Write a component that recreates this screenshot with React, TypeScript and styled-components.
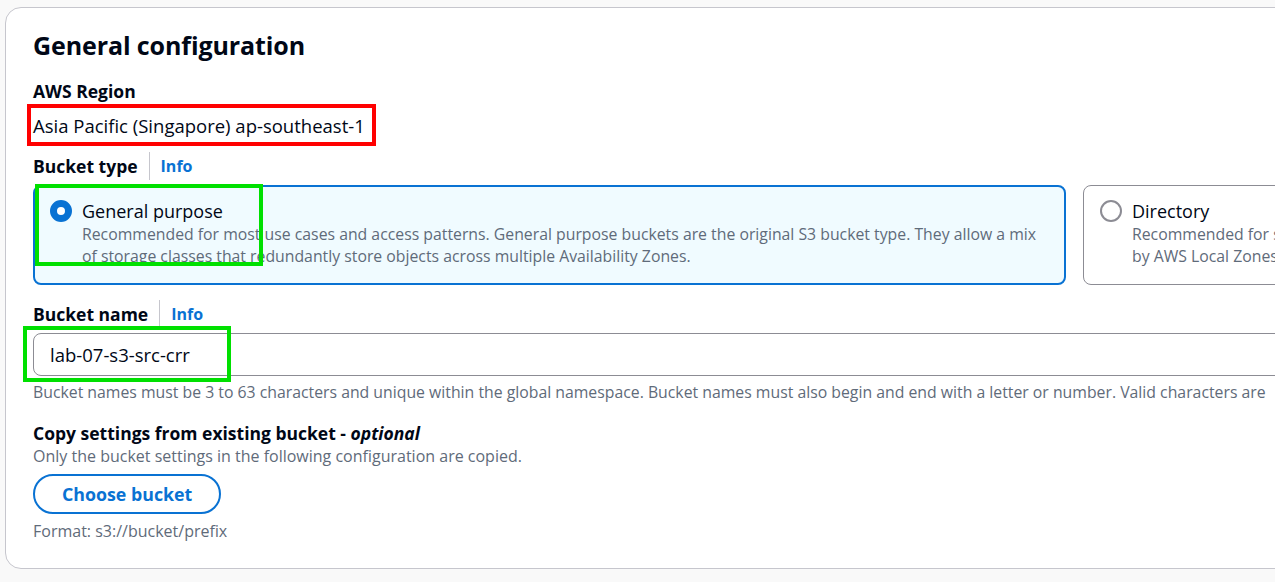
import React from 'react';
import styled, { createGlobalStyle } from 'styled-components';

const GlobalStyle = createGlobalStyle`
	html, body {
		margin: 0;
		padding: 0;
		background: #f9f9f9;
		overflow: hidden;
	}
	body {
		font-family: 'Open Sans', 'Noto Sans', Arial, sans-serif;
		color: #000716;
	}
`;

const Page = styled.div`
	position: relative;
	width: 1275px;
	height: 582px;
	padding: 7px 0 0 5px;
	box-sizing: border-box;
	overflow: hidden;
`;

const Card = styled.section`
	width: 2140px;
	box-sizing: border-box;
	background: #ffffff;
	border: 1px solid #c6c6cd;
	border-radius: 16px;
	padding: 20px 27px 26px;
`;

const Heading = styled.h2`
	margin: 0 0 18px;
	font-size: 25px;
	line-height: 34px;
	font-weight: 700;
	letter-spacing: -0.1px;
`;

const Field = styled.div<{ $gap?: number }>`
	margin-bottom: ${p => p.$gap ?? 0}px;
`;

const LabelRow = styled.div`
	display: flex;
	align-items: center;
	height: 28px;
	margin-bottom: 5px;
`;

const Label = styled.div`
	font-size: 17.5px;
	font-weight: 700;
	line-height: 22px;

	em {
		font-weight: 700;
		font-style: italic;
	}
`;

const InfoLink = styled.a`
	display: flex;
	align-items: center;
	height: 28px;
	margin-left: 11px;
	padding-left: 11px;
	border-left: 1px solid #c6c6cd;
	font-size: 16px;
	font-weight: 700;
	color: #0972d3;
	text-decoration: none;
	cursor: pointer;
`;

const Value = styled.div`
	font-size: 18.5px;
	line-height: 24px;
	padding-top: 12px;
`;

const Tiles = styled.div`
	display: grid;
	grid-template-columns: 1033px 1033px;
	gap: 17px;
`;

const Tile = styled.label<{ $selected?: boolean }>`
	display: grid;
	grid-template-columns: 22px 1fr;
	column-gap: 10px;
	box-sizing: border-box;
	height: 100px;
	padding: ${p => (p.$selected ? '13px 20px 12px 15px' : '14px 21px 13px 16px')};
	border: ${p => (p.$selected ? '2px solid #0972d3' : '1px solid #8c8c94')};
	border-radius: 8px;
	background: ${p => (p.$selected ? '#f0fbff' : '#ffffff')};
	cursor: pointer;
`;

const Radio = styled.span<{ $checked?: boolean }>`
	width: 22px;
	height: 22px;
	box-sizing: border-box;
	border-radius: 50%;
	border: ${p => (p.$checked ? '7px solid #0972d3' : '2px solid #8c8c94')};
	background: #ffffff;
`;

const TileTitle = styled.div`
	font-size: 18px;
	line-height: 22px;
	margin-bottom: 1px;
`;

const TileDesc = styled.div`
	font-size: 15.8px;
	line-height: 22px;
	color: #5f6b7a;
	white-space: nowrap;
`;

const Input = styled.input`
	display: block;
	width: 100%;
	height: 43px;
	box-sizing: border-box;
	padding: 0 16px;
	border: 1px solid #8c8c94;
	border-radius: 8px;
	font-family: inherit;
	font-size: 18.5px;
	color: #000716;
	background: #ffffff;
	outline: none;
`;

const Hint = styled.div<{ $top?: number }>`
	font-size: 16px;
	line-height: 22px;
	color: #5f6b7a;
	white-space: nowrap;
	padding-top: ${p => p.$top ?? 0}px;
`;

const FieldHint = styled(Hint)`
	font-size: 15.8px;
`;

const OutlineButton = styled.button`
	display: block;
	height: 40px;
	margin: 7px 0 6px;
	padding: 0 27px;
	border: 2px solid #0972d3;
	border-radius: 20px;
	background: #ffffff;
	color: #0972d3;
	font-family: inherit;
	font-size: 17.8px;
	font-weight: 700;
	cursor: pointer;
`;

const Annotation = styled.div<{ $x: number; $y: number; $w: number; $h: number; $color: string }>`
	position: absolute;
	left: ${p => p.$x}px;
	top: ${p => p.$y}px;
	width: ${p => p.$w}px;
	height: ${p => p.$h}px;
	box-sizing: border-box;
	border: 4px solid ${p => p.$color};
	pointer-events: none;
`;

export default function App() {
	return (
		<>
			<GlobalStyle />
			<Page>
				<Card>
					<Heading>General configuration</Heading>

					<Field $gap={14}>
						<Label>AWS Region</Label>
						<Value>Asia Pacific (Singapore) ap-southeast-1</Value>
					</Field>

					<Field $gap={15}>
						<LabelRow>
							<Label>Bucket type</Label>
							<InfoLink>Info</InfoLink>
						</LabelRow>
						<Tiles>
							<Tile $selected>
								<Radio $checked />
								<div>
									<TileTitle>General purpose</TileTitle>
									<TileDesc>
										Recommended for most use cases and access patterns. General purpose buckets are the original S3 bucket type. They allow a mix
										<br />
										of storage classes that redundantly store objects across multiple Availability Zones.
									</TileDesc>
								</div>
							</Tile>
							<Tile>
								<Radio />
								<div>
									<TileTitle>Directory</TileTitle>
									<TileDesc>
										Recommended for specialized use cases such as low-latency workloads and data residency, including workloads supported
										<br />
										by AWS Local Zones.
									</TileDesc>
								</div>
							</Tile>
						</Tiles>
					</Field>

					<Field $gap={19}>
						<LabelRow>
							<Label>Bucket name</Label>
							<InfoLink>Info</InfoLink>
						</LabelRow>
						<Input defaultValue="lab-07-s3-src-crr" />
						<FieldHint $top={5}>
							Bucket names must be 3 to 63 characters and unique within the global namespace. Bucket names must also begin and end with a letter or number. Valid characters are
						</FieldHint>
					</Field>

					<Field>
						<Label>
							Copy settings from existing bucket - <em>optional</em>
						</Label>
						<Hint $top={1}>Only the bucket settings in the following configuration are copied.</Hint>
						<OutlineButton>Choose bucket</OutlineButton>
						<Hint>Format: s3://bucket/prefix</Hint>
					</Field>
				</Card>

				<Annotation $x={27} $y={104} $w={349} $h={42} $color="#ff0000" />
				<Annotation $x={35} $y={184} $w={228} $h={82} $color="#00e000" />
				<Annotation $x={23} $y={326} $w={208} $h={56} $color="#00e000" />
			</Page>
		</>
	);
}
